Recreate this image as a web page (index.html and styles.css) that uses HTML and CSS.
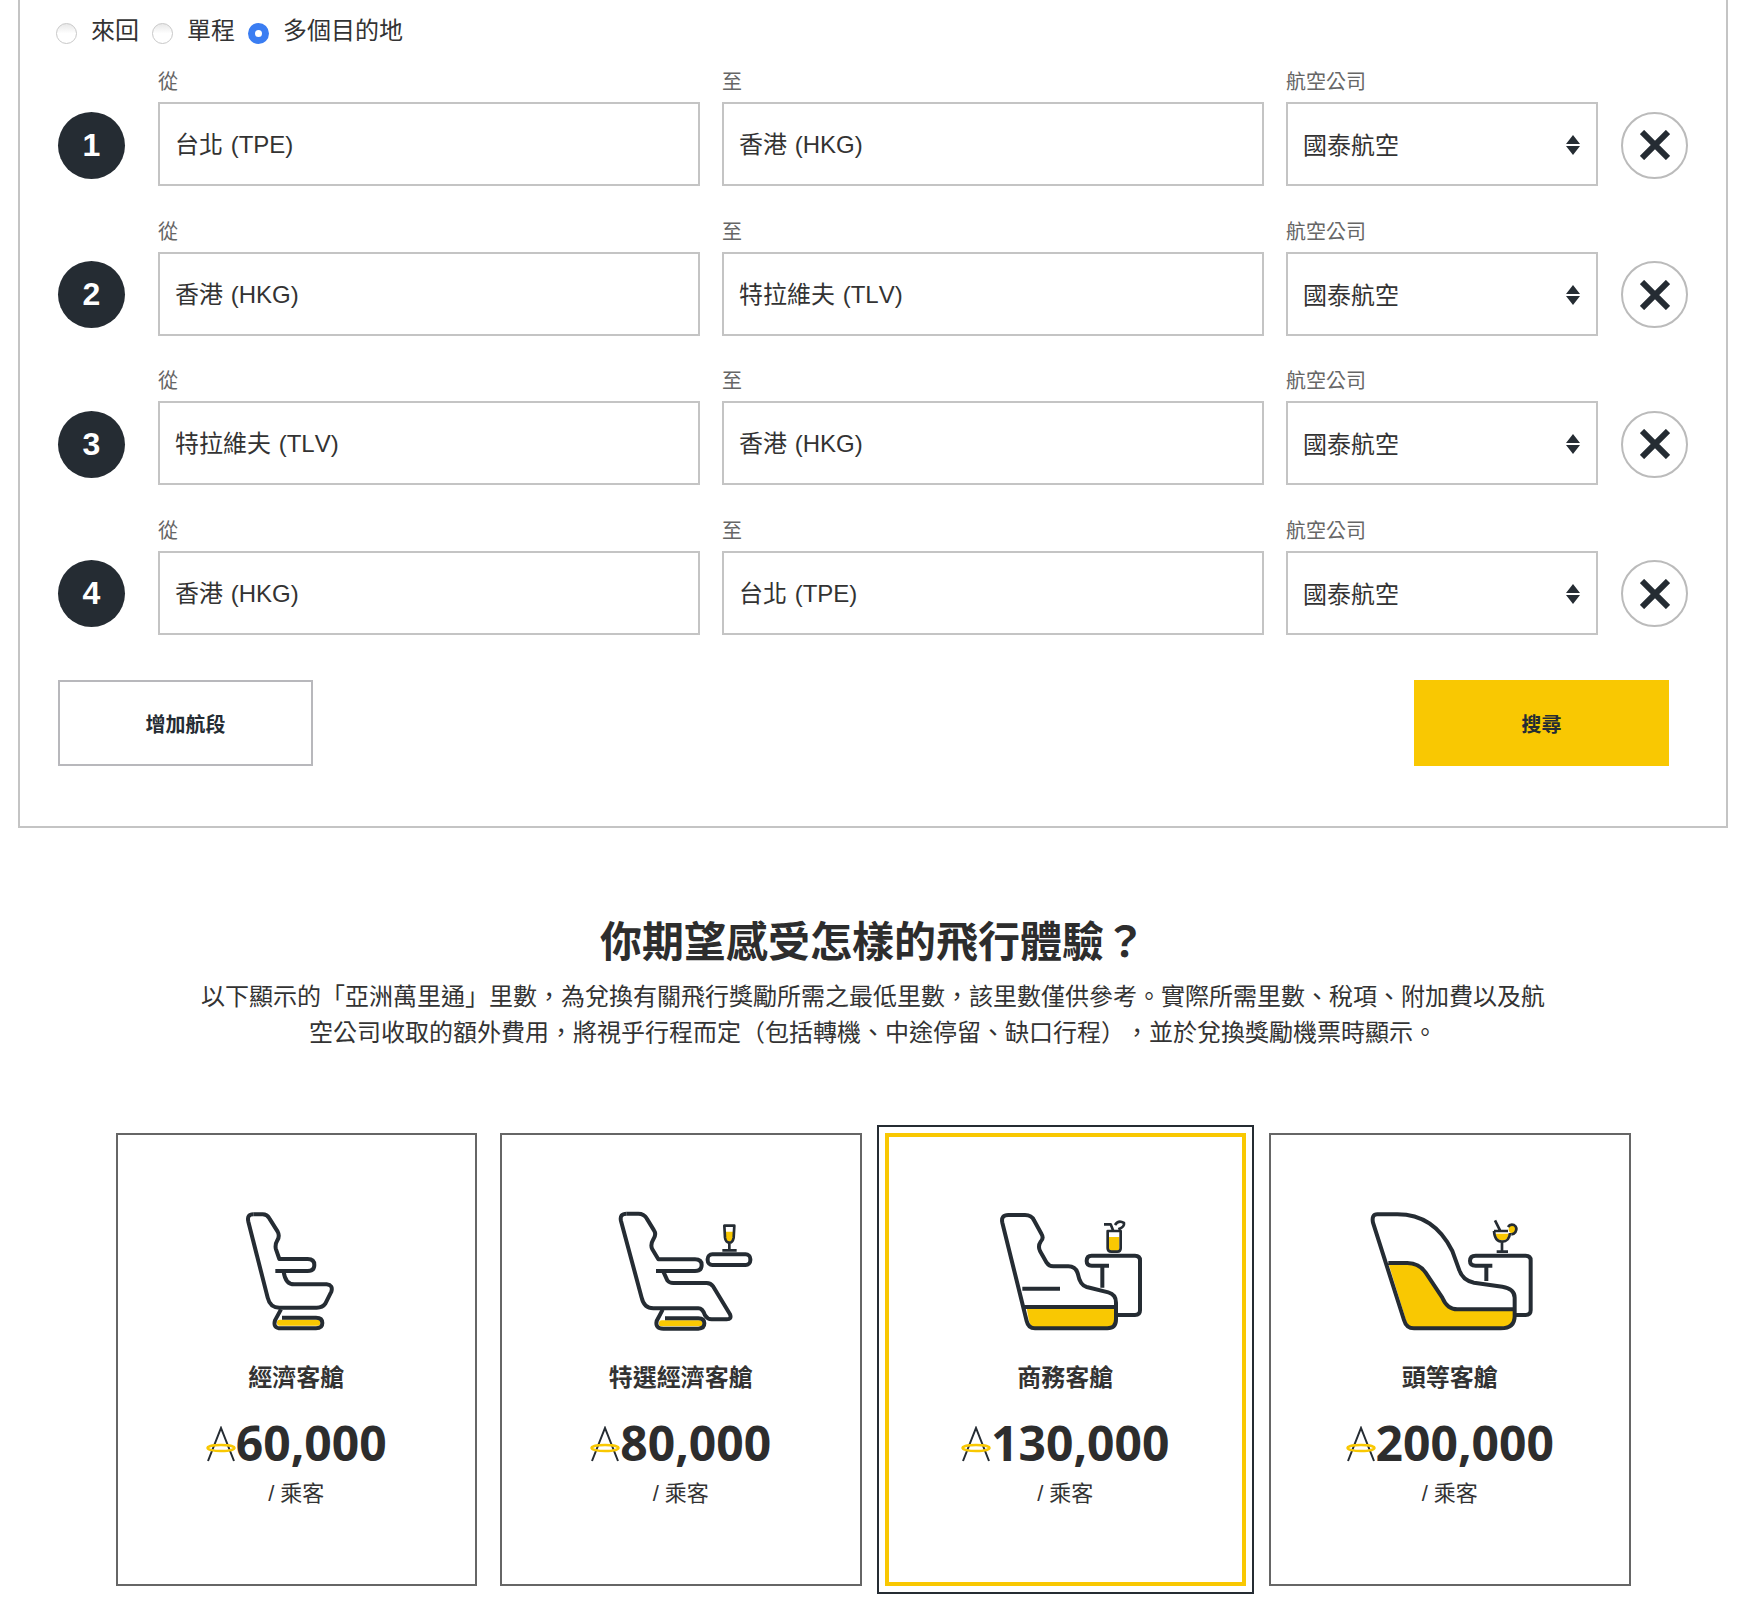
FILE: index.html
```html
<!DOCTYPE html>
<html lang="zh-Hant">

<head>
	<meta charset="utf-8" />
	<title>Asia Miles</title>
	<link rel="stylesheet" href="styles.css">
</head>

<body>
	<div class="panel">
		<div class="trip-types">
			<label class="trip-type"><input type="radio" name="trip"><span>來回</span></label>
			<label class="trip-type"><input type="radio" name="trip"><span>單程</span></label>
			<label class="trip-type"><input type="radio" name="trip" checked><span>多個目的地</span></label>
		</div>

		<div class="leg">
			<div class="leg-number">1</div>
			<div class="field field-city"><div class="field-label">從</div><div class="field-box">台北 (TPE)</div></div>
			<div class="field field-city"><div class="field-label">至</div><div class="field-box">香港 (HKG)</div></div>
			<div class="field field-airline"><div class="field-label">航空公司</div><div class="field-box field-select">國泰航空<svg class="select-arrows" viewBox="0 0 14 20"><path d="M7 0l7 9H0zM0 11h14l-7 9z" /></svg></div></div>
			<div class="leg-remove"><svg viewBox="0 0 30 30"><path d="M2 2l26 26M28 2L2 28" /></svg></div>
		</div>

		<div class="leg">
			<div class="leg-number">2</div>
			<div class="field field-city"><div class="field-label">從</div><div class="field-box">香港 (HKG)</div></div>
			<div class="field field-city"><div class="field-label">至</div><div class="field-box">特拉維夫 (TLV)</div></div>
			<div class="field field-airline"><div class="field-label">航空公司</div><div class="field-box field-select">國泰航空<svg class="select-arrows" viewBox="0 0 14 20"><path d="M7 0l7 9H0zM0 11h14l-7 9z" /></svg></div></div>
			<div class="leg-remove"><svg viewBox="0 0 30 30"><path d="M2 2l26 26M28 2L2 28" /></svg></div>
		</div>

		<div class="leg">
			<div class="leg-number">3</div>
			<div class="field field-city"><div class="field-label">從</div><div class="field-box">特拉維夫 (TLV)</div></div>
			<div class="field field-city"><div class="field-label">至</div><div class="field-box">香港 (HKG)</div></div>
			<div class="field field-airline"><div class="field-label">航空公司</div><div class="field-box field-select">國泰航空<svg class="select-arrows" viewBox="0 0 14 20"><path d="M7 0l7 9H0zM0 11h14l-7 9z" /></svg></div></div>
			<div class="leg-remove"><svg viewBox="0 0 30 30"><path d="M2 2l26 26M28 2L2 28" /></svg></div>
		</div>

		<div class="leg">
			<div class="leg-number">4</div>
			<div class="field field-city"><div class="field-label">從</div><div class="field-box">香港 (HKG)</div></div>
			<div class="field field-city"><div class="field-label">至</div><div class="field-box">台北 (TPE)</div></div>
			<div class="field field-airline"><div class="field-label">航空公司</div><div class="field-box field-select">國泰航空<svg class="select-arrows" viewBox="0 0 14 20"><path d="M7 0l7 9H0zM0 11h14l-7 9z" /></svg></div></div>
			<div class="leg-remove"><svg viewBox="0 0 30 30"><path d="M2 2l26 26M28 2L2 28" /></svg></div>
		</div>

		<div class="actions">
			<button class="btn btn-add" type="button">增加航段</button>
			<button class="btn btn-search" type="button">搜尋</button>
		</div>
	</div>

	<div class="experience">
		<h1>你期望感受怎樣的飛行體驗？</h1>
		<p>以下顯示的「亞洲萬里通」里數，為兌換有關飛行獎勵所需之最低里數，該里數僅供參考。實際所需里數、稅項、附加費以及航空公司收取的額外費用，將視乎行程而定（包括轉機、中途停留、缺口行程），並於兌換獎勵機票時顯示。</p>

		<div class="cabins">
			<div class="cabin">
				<svg class="cabin-icon" viewBox="230 270 720 390">
					<rect class="fill" x="533" y="596" width="130" height="18" rx="8" />
					<path class="line" d="M462 280L490 280Q503 280 510 292L535 332Q542 345 534 358Q526 372 530 385L540 414L625 414Q645 414 645 432Q645 450 625 450L528 450" />
					<path class="line" d="M553 452Q558 490 585 490L682 490Q702 492 696 512L678 548Q670 560 652 560L540 560Q512 560 505 530L447 302Q442 280 462 280" />
					<path class="line" d="M545 565L527 598Q520 622 545 622L650 622Q669 622 669 606Q669 590 650 590L548 590" />
				</svg>
				<div class="cabin-name">經濟客艙</div>
				<div class="cabin-price"><svg class="miles" viewBox="0 0 30 36"><path class="miles-a" d="M2 35L15 2L28 35" /><ellipse class="miles-ring" cx="15" cy="22" rx="13.5" ry="3" /></svg>60,000</div>
				<div class="cabin-unit">/ 乘客</div>
			</div>

			<div class="cabin">
				<svg class="cabin-icon" viewBox="213 270 720 390">
					<rect class="fill" x="507" y="598" width="130" height="18" rx="8" />
					<path class="fill" d="M706 332L730 332L728 352Q726 362 718 362Q708 362 707 350Z" />
					<path class="line" d="M410 278L445 278Q462 278 470 292L492 328Q500 340 490 355Q480 372 487 385L505 415L615 415Q635 415 635 432Q635 450 615 450L498 450" />
					<path class="line" d="M520 452L532 478Q538 486 550 486L650 486Q662 486 670 497L720 580Q726 595 710 595L665 595Q652 595 645 583Q638 562 625 562L490 562Q462 562 455 530L393 300Q388 278 410 278" />
					<path class="line" d="M518 566L500 600Q495 623 520 623L625 623Q643 623 643 607Q643 592 625 592L525 592" />
					<rect class="line" x="653" y="400" width="128" height="32" rx="14" />
					<path class="line-thin" d="M703 314L733 314L731 350Q728 365 718 365Q707 365 705 350ZM718 365L718 388M697 388L740 388" />
				</svg>
				<div class="cabin-name">特選經濟客艙</div>
				<div class="cabin-price"><svg class="miles" viewBox="0 0 30 36"><path class="miles-a" d="M2 35L15 2L28 35" /><ellipse class="miles-ring" cx="15" cy="22" rx="13.5" ry="3" /></svg>80,000</div>
				<div class="cabin-unit">/ 乘客</div>
			</div>

			<div class="cabin cabin-selected">
				<svg class="cabin-icon" viewBox="225 270 720 390">
					<path class="fill" d="M470 560L734 560L734 595Q734 618 712 618L495 618Q480 618 476 595Z" />
					<path class="fill" d="M716 348L748 348L748 382Q748 390 738 390L726 390Q716 390 716 382Z" />
					<path class="line" d="M415 282L465 282Q485 282 492 298L515 340Q522 352 512 362Q503 375 510 390L530 425Q537 436 550 436L595 436Q618 436 624 460Q630 492 650 498L715 514Q738 520 738 545L738 595Q738 622 712 622L495 622Q475 622 470 600L397 305Q392 282 415 282ZM464 558L738 558M457 503L570 503" />
					<path class="line" d="M740 582L795 582Q810 582 810 568L810 418Q810 404 795 404L665 404Q650 404 650 420Q650 434 665 434L717 434M697 434L697 500" />
					<path class="line-thin" d="M713 330L713 382Q713 392 724 392L742 392Q752 392 752 382L752 330ZM702 310L722 310L730 330M735 312Q745 296 762 306Q764 318 745 325" />
				</svg>
				<div class="cabin-name">商務客艙</div>
				<div class="cabin-price"><svg class="miles" viewBox="0 0 30 36"><path class="miles-a" d="M2 35L15 2L28 35" /><ellipse class="miles-ring" cx="15" cy="22" rx="13.5" ry="3" /></svg>130,000</div>
				<div class="cabin-unit">/ 乘客</div>
			</div>

			<div class="cabin">
				<svg class="cabin-icon" viewBox="208 270 720 390">
					<path class="fill" d="M383 426L440 426Q475 426 495 455L545 530Q560 565 590 565L758 565L758 585Q758 618 720 618L460 618Q440 618 435 595Z" />
					<path class="fill" d="M704 338L746 338Q742 358 724 358Q708 358 704 338Z" />
					<circle class="fill" cx="756" cy="325" r="12" />
					<path class="line" d="M350 280L410 280Q520 280 575 390L595 445Q605 478 640 485L725 497Q762 503 762 530L762 585Q762 622 720 622L460 622Q437 622 430 597L337 305Q332 280 350 280ZM383 426L440 426Q475 426 495 455L545 530Q560 565 590 565L760 565" />
					<path class="line" d="M765 582L795 582Q810 582 810 568L810 418Q810 404 795 404L645 404Q628 404 628 420Q628 434 645 434L695 434M677 434L677 480" />
					<path class="line-thin" d="M700 330L742 330M700 330Q702 362 724 362Q746 362 748 336M724 362L724 392M708 392L742 392M703 298L718 328M742 318Q748 308 760 312Q772 320 764 334Q760 340 752 340" />
				</svg>
				<div class="cabin-name">頭等客艙</div>
				<div class="cabin-price"><svg class="miles" viewBox="0 0 30 36"><path class="miles-a" d="M2 35L15 2L28 35" /><ellipse class="miles-ring" cx="15" cy="22" rx="13.5" ry="3" /></svg>200,000</div>
				<div class="cabin-unit">/ 乘客</div>
			</div>
		</div>
	</div>
</body>

</html>
```

FILE: styles.css
```css
body {
	font-family: "Liberation Sans", "Noto Sans CJK TC", sans-serif;
	background-color: #fff;
	color: #333;
	margin: 0;
	padding: 0;
	text-spacing-trim: space-all;
}

.panel {
	box-sizing: border-box;
	width: 1710px;
	height: 828px;
	margin-left: 18px;
	padding-left: 38px;
	border: 2px solid #c4c4c4;
	border-top: 0;
}

.trip-types {
	display: flex;
	height: 68px;
	gap: 13px;
	font-size: 24px;
	margin-left: -2px;
}

.trip-type {
	display: flex;
	align-items: flex-start;
	gap: 14px;
	padding-top: 14px;
	line-height: 34px;
}

.trip-type input {
	-webkit-appearance: none;
	appearance: none;
	box-sizing: border-box;
	width: 21px;
	height: 21px;
	margin: 9px 0 0;
	border: 1px solid #c8c8c8;
	border-radius: 50%;
	background: linear-gradient(#e8e8e8, #fff 50%);
}

.trip-type input:checked {
	border: 7px solid #3a7df2;
	background: #fff;
}

/* One row per flight leg */
.leg {
	display: flex;
	align-items: flex-end;
	margin-bottom: 31.67px;
}

.leg-number {
	width: 67px;
	height: 67px;
	margin: 0 33px 7.5px 0;
	border-radius: 50%;
	background-color: #252c33;
	color: #fff;
	font-size: 32px;
	font-weight: bold;
	line-height: 67px;
	text-align: center;
}

.field {
	margin-right: 22px;
}

.field-city {
	width: 542px;
}

.field-airline {
	width: 312px;
	margin-right: 23px;
}

.field-label {
	height: 34px;
	font-size: 20px;
	line-height: 28px;
	color: #666;
}

.field-box {
	position: relative;
	box-sizing: border-box;
	height: 84px;
	padding: 0 15px;
	border: 2px solid #c4c4c4;
	font-size: 24px;
	font-kerning: none;
	word-spacing: 1px;
	line-height: 81px;
}

.field-select {
	line-height: 84px;
}

.select-arrows {
	position: absolute;
	right: 16px;
	top: 31px;
	width: 14px;
	height: 20px;
	fill: #252c33;
}

.leg-remove {
	display: flex;
	align-items: center;
	justify-content: center;
	box-sizing: border-box;
	width: 67px;
	height: 67px;
	margin-bottom: 7.5px;
	border: 2px solid #bbb;
	border-radius: 50%;
}

.leg-remove svg {
	width: 30px;
	height: 30px;
	fill: none;
	stroke: #252c33;
	stroke-width: 6;
}

.actions {
	display: flex;
	justify-content: space-between;
	width: 1611px;
	margin-top: 45.5px;
}

.btn {
	box-sizing: border-box;
	width: 255px;
	height: 86px;
	padding: 1px 0 0;
	font-family: inherit;
	font-size: 20px;
	font-weight: bold;
	color: #252c33;
	border-radius: 0;
}

.btn-add {
	background-color: #fff;
	border: 2px solid #b8b8bc;
}

.btn-search {
	background-color: #f9c802;
	border: 0;
}

/* Cabin section */
.experience {
	width: 1710px;
	margin-left: 18px;
	padding-bottom: 33px;
	text-align: center;
}

h1 {
	margin: 87px 0 0;
	font-size: 42px;
	font-weight: bold;
	line-height: 56px;
	color: #2d2d2d;
}

p {
	width: 1350px;
	margin: 8px auto 0;
	font-size: 24px;
	line-height: 36px;
}

.cabins {
	display: grid;
	grid-template-columns: repeat(4, 361.5px);
	justify-content: center;
	gap: 23px;
	margin-top: 82px;
}

.cabin {
	box-sizing: border-box;
	height: 453px;
	padding-top: 76px;
	border: 2px solid #666;
}

.cabin-selected {
	padding-top: 74px;
	border: 4px solid #f9c802;
	outline: 2px solid #252c33;
	outline-offset: 6px;
}

.cabin-icon {
	display: block;
	width: 240px;
	height: 130px;
	margin: 0 auto;
}

.line,
.line-thin {
	fill: none;
	stroke: #252c33;
	stroke-width: 12;
	stroke-linejoin: round;
}

.line-thin {
	stroke-width: 8;
}

.fill {
	fill: #f9c802;
}

.cabin-name {
	margin-top: 20px;
	font-size: 24px;
	font-weight: bold;
	line-height: 34px;
}

.cabin-price {
	display: flex;
	align-items: center;
	justify-content: center;
	margin-top: 18px;
	font-family: "Open Sans", sans-serif;
	font-size: 48px;
	font-weight: bold;
	line-height: 60px;
	color: #2d2d2d;
}

.miles {
	width: 30px;
	height: 36px;
	margin-top: 2px;
}

.miles-a {
	fill: none;
	stroke: #252c33;
	stroke-width: 2;
}

.miles-ring {
	fill: none;
	stroke: #f9c802;
	stroke-width: 2.4;
}

.cabin-unit {
	margin-top: 6px;
	font-size: 22px;
	line-height: 30px;
}
```
